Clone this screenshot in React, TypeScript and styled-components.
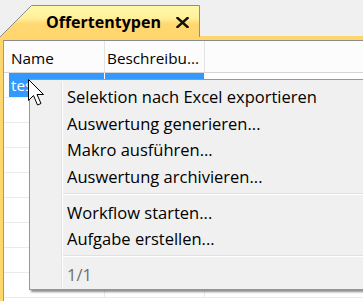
import styled, { createGlobalStyle } from "styled-components";

const GlobalStyle = createGlobalStyle`
  html, body {
    margin: 0;
    padding: 0;
    background: #f0f0f0;
  }
  body {
    font-family: "Open Sans", "Noto Sans", "DejaVu Sans", sans-serif;
    font-size: 15px;
    color: #000;
  }
`;

const menuItems = [
  "Selektion nach Excel exportieren",
  "Auswertung generieren...",
  "Makro ausführen...",
  "Auswertung archivieren...",
  "-",
  "Workflow starten...",
  "Aufgabe erstellen...",
  "-",
];

const App = () => {
  return (
    <>
      <GlobalStyle />
      <Page>
        <TabStrip>
          <Tab>
            <TabShape width="201" height="32" viewBox="0 0 201 32">
              <defs>
                <linearGradient id="tabFill" x1="0" y1="0" x2="0" y2="1">
                  <stop offset="0" stopColor="#fff9a8" />
                  <stop offset="0.4" stopColor="#fff09a" />
                  <stop offset="0.58" stopColor="#ffd872" />
                  <stop offset="1" stopColor="#ffd56e" />
                </linearGradient>
              </defs>
              <path
                d="M0 32 L31.5 0.5 L199.5 0.5 L199.5 32 Z"
                fill="url(#tabFill)"
              />
              <path
                d="M0 32 L31.5 0.5 L199.5 0.5 L199.5 32"
                fill="none"
                stroke="#8d8d8d"
              />
            </TabShape>
            <TabTitle>Offertentypen</TabTitle>
            <CloseIcon width="13" height="11" viewBox="0 0 13 11">
              <path
                d="M1.5 1 L11.5 10 M11.5 1 L1.5 10"
                stroke="#111"
                strokeWidth="2.4"
                strokeLinecap="square"
              />
            </CloseIcon>
          </Tab>
        </TabStrip>
        <YellowBar />
        <Body>
          <LeftStrip />
          <Panel>
            <HeaderRow>
              <Gap />
              <HeaderCell $w={96}>Name</HeaderCell>
              <HeaderCell $w={100}>Beschreibu...</HeaderCell>
              <Filler />
            </HeaderRow>
            {Array.from({ length: 9 }).map((_, i) => (
              <Row key={i}>
                <Gap />
                <Cell $w={96} $selected={i === 0}>
                  {i === 0 ? "test" : ""}
                </Cell>
                <Cell $w={100} $selected={i === 0} />
                <Filler />
              </Row>
            ))}
          </Panel>
        </Body>

        <Menu>
          {menuItems.map((label, i) =>
            label === "-" ? (
              <Separator key={i} $h={i === 4 ? 9 : 7} />
            ) : (
              <MenuItem key={i}>{label}</MenuItem>
            )
          )}
          <MenuItem $muted>1/1</MenuItem>
        </Menu>

        <Cursor width="17" height="28" viewBox="0 0 17 28">
          <path
            d="M0.5 0.5 L0.5 21.5 L5.5 16.5 L9.5 26 L13 24.5 L9 15.5 L15.5 15.5 Z"
            fill="#fff"
            stroke="#000"
            strokeWidth="1"
            strokeLinejoin="miter"
          />
        </Cursor>
      </Page>
    </>
  );
};

export default App;

const Page = styled.div`
  position: relative;
  width: 363px;
  height: 301px;
  overflow: hidden;
  background: #f0f0f0;
`;

const TabStrip = styled.div`
  height: 36px;
  padding-top: 5px;
  box-sizing: border-box;
  display: flex;
  align-items: flex-end;
`;

const Tab = styled.div`
  position: relative;
  width: 201px;
  height: 31px;
  display: flex;
  align-items: center;
  padding-left: 46px;
  box-sizing: border-box;
`;

const TabShape = styled.svg`
  position: absolute;
  left: 0;
  top: 0;
`;

const TabTitle = styled.span`
  position: relative;
  font-weight: 700;
  font-size: 16px;
  margin-top: 3px;
`;

const CloseIcon = styled.svg`
  position: relative;
  margin-left: 15px;
  margin-top: 4px;
`;

const YellowBar = styled.div`
  height: 4px;
  background: #ffd56e;
`;

const Body = styled.div`
  display: flex;
  height: 261px;
`;

const LeftStrip = styled.div`
  width: 3px;
  background: #ffd56e;
`;

const Panel = styled.div`
  flex: 1;
  background: #fff;
  border-left: 1px solid #9a9a9a;
  border-top: 1px solid #8a8a8a;
`;

const HeaderRow = styled.div`
  display: flex;
  height: 31px;
  border-bottom: 1px solid #d5d5d5;
  background: #fcfcfc;
`;

const Gap = styled.div`
  width: 5px;
  flex: none;
`;

const HeaderCell = styled.div<{ $w: number }>`
  width: ${(p) => p.$w}px;
  flex: none;
  border-right: 1px solid #e3e3e3;
  padding-left: 2px;
  box-sizing: border-box;
  display: flex;
  align-items: center;
  padding-top: 3px;
  font-size: 15.3px;
  white-space: nowrap;
  overflow: hidden;
`;

const Filler = styled.div`
  flex: 1;
`;

const Row = styled.div`
  display: flex;
  height: 24px;
  border-bottom: 1px solid #ebebeb;
`;

const Cell = styled.div<{ $w: number; $selected?: boolean }>`
  width: ${(p) => p.$w}px;
  flex: none;
  box-sizing: border-box;
  border-right: 1px solid ${(p) => (p.$selected ? "#ffffff" : "#ebebeb")};
  background: ${(p) => (p.$selected ? "#3399ff" : "transparent")};
  color: ${(p) => (p.$selected ? "#fff" : "#000")};
  padding-left: 2px;
  font-size: 15.3px;
  display: flex;
  align-items: center;
`;

const Menu = styled.div`
  position: absolute;
  left: 29px;
  top: 79px;
  width: 360px;
  height: 211px;
  box-sizing: border-box;
  border: 1px solid #979797;
  background: #f0f0f0;
  box-shadow: 2px 2px 2px rgba(0, 0, 0, 0.45);
  padding: 3px 0 0 2px;
  &::before {
    content: "";
    position: absolute;
    left: 31px;
    top: 2px;
    bottom: 2px;
    width: 1px;
    background: #e2e3e3;
    border-right: 1px solid #ffffff;
  }
`;

const MenuItem = styled.div<{ $muted?: boolean }>`
  height: ${(p) => (p.$muted ? 29 : 26.7)}px;
  display: flex;
  align-items: center;
  padding-left: 35px;
  padding-top: ${(p) => (p.$muted ? 2 : 0)}px;
  box-sizing: border-box;
  font-size: 16.5px;
  white-space: nowrap;
  color: ${(p) => (p.$muted ? "#6d6d6d" : "#000")};
`;

const Separator = styled.div<{ $h: number }>`
  height: ${(p) => p.$h}px;
  margin-left: 31px;
  display: flex;
  align-items: center;
  &::after {
    content: "";
    flex: 1;
    height: 1px;
    background: #e0e0e0;
    border-bottom: 1px solid #ffffff;
  }
`;

const Cursor = styled.svg`
  position: absolute;
  left: 28px;
  top: 79px;
`;
